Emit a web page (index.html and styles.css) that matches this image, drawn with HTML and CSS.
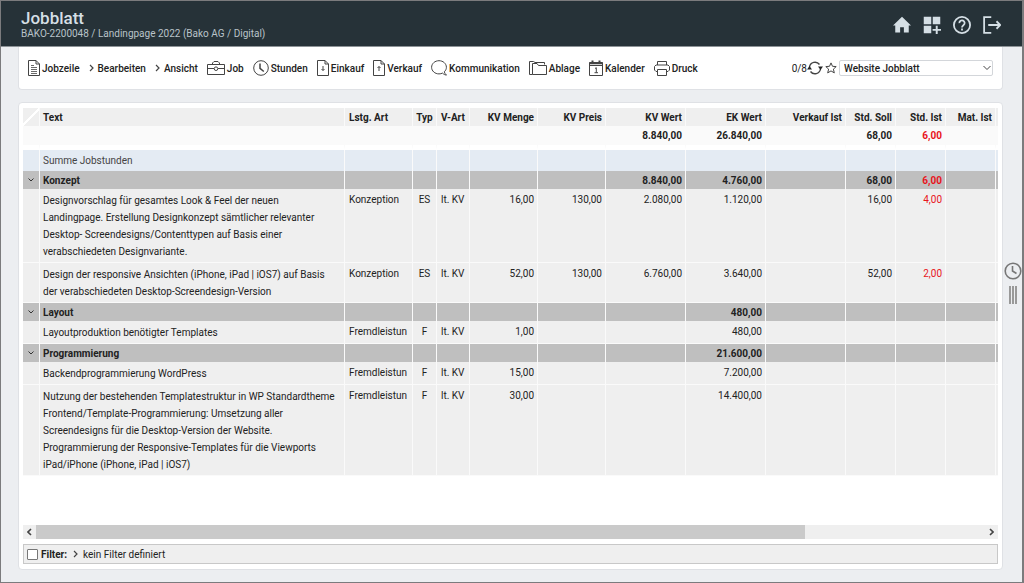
FILE: index.html
```html
<!DOCTYPE html>
<html lang="de">
<head>
  <meta charset="UTF-8">
  <meta name="viewport" content="width=device-width, initial-scale=1.0">
  <title>Jobblatt</title>
  <link rel="stylesheet" href="styles.css">
</head>
<body>
  <header class="header">
    <div class="heading">
      <h1>Jobblatt</h1>
      <p>BAKO-2200048 / Landingpage 2022 (Bako AG / Digital)</p>
    </div>
    <nav class="header-nav">
      <a href="#" aria-label="Home">
        <svg viewBox="0 0 24 24" fill="currentColor"><path d="M9.500 22v-7h5v7H21v-9.500h3L12 1 0 12.500h3V22z"/></svg>
      </a>
      <a href="#" aria-label="Widgets">
        <svg viewBox="0 0 24 24" fill="currentColor"><path d="M1 1h10v10H1zM13 1h10v10H13zM1 13h10v10H1zM17 13h2.600v4.200H24v2.600h-4.400V24H17v-4.200h-4.200v-2.600H17z"/></svg>
      </a>
      <a href="#" aria-label="Hilfe">
        <svg viewBox="0 0 24 24" fill="none" stroke="currentColor" stroke-width="2.4"><circle cx="12" cy="12" r="10.800"/><path d="M8.500 9.500a3.500 3.500 0 1 1 5.600 2.600c-1.300 1-2.100 1.500-2.100 3.200M12 16.800v2.400"/></svg>
      </a>
      <a href="#" aria-label="Abmelden">
        <svg viewBox="0 0 24 24" fill="none" stroke="currentColor" stroke-width="2.400"><path d="M11 1.500H1.500v21H11M7 12h16M18 7l5 5-5 5"/></svg>
      </a>
    </nav>
  </header>

  <div class="page">
    <main class="content">
      <div class="toolbar">
        <button class="tool">
          <svg class="doc" viewBox="0 0 12 16"><path d="M.5.5H8L11.500 4v11.500H.5zM8 .5V4h3.500"/><path d="M3 5.500h3M3 7.500h6M3 9.500h6M3 11.500h6M3 13.500h6" stroke-width=".8"/></svg>
          Jobzeile
        </button>
        <button class="tool menu">
          <svg class="chevron" viewBox="0 0 5 8"><path d="M1 1l3 3-3 3"/></svg>
          Bearbeiten
        </button>
        <button class="tool menu">
          <svg class="chevron" viewBox="0 0 5 8"><path d="M1 1l3 3-3 3"/></svg>
          Ansicht
        </button>
        <button class="tool">
          <svg class="wide" viewBox="0 0 18 16"><path d="M.5 4.500h17v10H.5zM5.500 4.500V3L7 1.500h4L12.500 3v1.500M.5 8.500H7M11 8.500h6.500"/><circle cx="9" cy="8.700" r="1.800"/></svg>
          Job
        </button>
        <button class="tool">
          <svg viewBox="0 0 16 16"><circle cx="8" cy="8" r="7.300"/><path d="M7 3.500v4.800l3.800 3.200" stroke-width="1.500"/></svg>
          Stunden
        </button>
        <button class="tool">
          <svg class="doc" viewBox="0 0 12 16"><path d="M.5.5H8L11.500 4v11.500H.5zM8 .5V4h3.500M6 6v4.500M4.500 9L6 10.500 7.500 9"/></svg>
          Einkauf
        </button>
        <button class="tool">
          <svg class="doc" viewBox="0 0 12 16"><path d="M.5.5H8L11.500 4v11.500H.5zM8 .5V4h3.500M6 11V6.500M4.500 8L6 6.500 7.500 8"/></svg>
          Verkauf
        </button>
        <button class="tool">
          <svg viewBox="0 0 16 16"><path d="M13.300 11.800c1.300-1.200 2.100-2.700 2.100-4.500C15.400 3.600 12.100.7 8 .7S.6 3.600.6 7.300 3.900 13.900 8 13.900c1.300 0 2.500-.3 3.500-.8 1.200 1.200 2.500 1.900 4 2-1.200-.9-1.900-2-2.200-3.300z"/></svg>
          Kommunikation
        </button>
        <button class="tool">
          <svg class="wide" viewBox="0 0 18 16"><path d="M3.500 14.500h-3v-13h4L6 2.500h9.500v2M3.500 14.500v-11H8l1.500 2h8v9z"/></svg>
          Ablage
        </button>
        <button class="tool">
          <svg class="cal" viewBox="0 0 14 16"><path d="M.5 2.500h13v13H.5zM.5 5.500h13M6 8.500l1.300-.8v5M5.500 12.700h3.500"/><path d="M3.500.5v3M10.500.5v3M.5 3.300h13" stroke-width="2"/></svg>
          Kalender
        </button>
        <button class="tool">
          <svg viewBox="0 0 16 16"><path d="M3.500 5V1.500h9V5M3.500 11.500H2l-1.500-1.500V6.500L2 5h12l1.500 1.500V10L14 11.500h-1.500M3.500 9.500h9v6h-9z"/></svg>
          Druck
        </button>

        <div class="view">
          <span>0/8</span>
          <button class="icon-btn refresh" aria-label="Aktualisieren">
            <svg viewBox="0 0 16 14"><path d="M2.500 6A5.600 5.600 0 0 1 12.500 3.500M13.500 8A5.600 5.600 0 0 1 3.500 10.500"/><path d="M0 8.500h5L2.500 5zM11 5.500h5L13.500 9z" fill="currentColor" stroke="none"/></svg>
          </button>
          <button class="icon-btn star" aria-label="Favorit">
            <svg viewBox="0 0 12 12"><path d="M6 .9l1.500 3.400 3.700.3-2.800 2.500.9 3.800L6 8.900l-3.300 2 .9-3.800L.8 4.600l3.700-.3z"/></svg>
          </button>
          <select class="view-select" aria-label="Ansicht">
            <option>Website Jobblatt</option>
          </select>
        </div>
      </div>

      <section class="sheet">
        <div class="table-wrap">
          <table class="jobs">
            <colgroup>
              <col class="c-toggle"><col><col class="c-art"><col class="c-typ"><col class="c-vart">
              <col class="c-menge"><col class="c-menge"><col class="c-wert"><col class="c-wert"><col class="c-wert">
              <col class="c-std"><col class="c-std"><col class="c-std"><col class="c-end">
            </colgroup>
            <thead>
              <tr>
                <th class="corner"></th><th class="text">Text</th><th>Lstg. Art</th><th class="mid">Typ</th><th>V-Art</th>
                <th class="num">KV Menge</th><th class="num">KV Preis</th><th class="num">KV Wert</th><th class="num">EK Wert</th><th class="num">Verkauf Ist</th>
                <th class="num">Std. Soll</th><th class="num">Std. Ist</th><th class="num">Mat. Ist</th><th></th>
              </tr>
              <tr class="total">
                <td></td><td></td><td></td><td></td><td></td><td></td><td></td>
                <td class="num">8.840,00</td><td class="num">26.840,00</td><td></td><td class="num">68,00</td><td class="num red">6,00</td><td></td><td></td>
              </tr>
            </thead>
            <tbody>
              <tr class="hours">
                <td></td><td class="text">Summe Jobstunden</td><td></td><td></td><td></td><td></td><td></td><td></td><td></td><td></td><td></td><td></td><td></td><td></td>
              </tr>
              <tr class="group">
                <td><button class="toggle" aria-label="Konzept einklappen"><svg viewBox="0 0 6 4"><path d="M.5.5L3 3 5.500.5"/></svg></button></td>
                <td class="text">Konzept</td><td></td><td></td><td></td><td></td><td></td>
                <td class="num">8.840,00</td><td class="num">4.760,00</td><td></td><td class="num">68,00</td><td class="num red">6,00</td><td></td><td></td>
              </tr>
              <tr>
                <td></td>
                <td class="text desc">Designvorschlag für gesamtes Look &amp; Feel der neuen<br>Landingpage. Erstellung Designkonzept sämtlicher relevanter<br>Desktop- Screendesigns/Contenttypen auf Basis einer<br>verabschiedeten Designvariante.</td>
                <td>Konzeption</td><td class="mid">ES</td><td>lt. KV</td><td class="num">16,00</td><td class="num">130,00</td>
                <td class="num">2.080,00</td><td class="num">1.120,00</td><td></td><td class="num">16,00</td><td class="num red">4,00</td><td></td><td></td>
              </tr>
              <tr>
                <td></td>
                <td class="text desc">Design der responsive Ansichten (iPhone, iPad | iOS7) auf Basis<br>der verabschiedeten Desktop-Screendesign-Version</td>
                <td>Konzeption</td><td class="mid">ES</td><td>lt. KV</td><td class="num">52,00</td><td class="num">130,00</td>
                <td class="num">6.760,00</td><td class="num">3.640,00</td><td></td><td class="num">52,00</td><td class="num red">2,00</td><td></td><td></td>
              </tr>
              <tr class="group">
                <td><button class="toggle" aria-label="Layout einklappen"><svg viewBox="0 0 6 4"><path d="M.5.5L3 3 5.500.5"/></svg></button></td>
                <td class="text">Layout</td><td></td><td></td><td></td><td></td><td></td>
                <td></td><td class="num">480,00</td><td></td><td></td><td></td><td></td><td></td>
              </tr>
              <tr>
                <td></td>
                <td class="text desc">Layoutproduktion benötigter Templates</td>
                <td>Fremdleistun</td><td class="mid">F</td><td>lt. KV</td><td class="num">1,00</td><td></td>
                <td></td><td class="num">480,00</td><td></td><td></td><td></td><td></td><td></td>
              </tr>
              <tr class="group">
                <td><button class="toggle" aria-label="Programmierung einklappen"><svg viewBox="0 0 6 4"><path d="M.5.5L3 3 5.500.5"/></svg></button></td>
                <td class="text">Programmierung</td><td></td><td></td><td></td><td></td><td></td>
                <td></td><td class="num">21.600,00</td><td></td><td></td><td></td><td></td><td></td>
              </tr>
              <tr>
                <td></td>
                <td class="text desc">Backendprogrammierung WordPress</td>
                <td>Fremdleistun</td><td class="mid">F</td><td>lt. KV</td><td class="num">15,00</td><td></td>
                <td></td><td class="num">7.200,00</td><td></td><td></td><td></td><td></td><td></td>
              </tr>
              <tr>
                <td></td>
                <td class="text desc">Nutzung der bestehenden Templatestruktur in WP Standardtheme<br>Frontend/Template-Programmierung: Umsetzung aller<br>Screendesigns für die Desktop-Version der Website.<br>Programmierung der Responsive-Templates für die Viewports<br>iPad/iPhone (iPhone, iPad | iOS7)</td>
                <td>Fremdleistun</td><td class="mid">F</td><td>lt. KV</td><td class="num">30,00</td><td></td>
                <td></td><td class="num">14.400,00</td><td></td><td></td><td></td><td></td><td></td>
              </tr>
            </tbody>
          </table>
        </div>

        <div class="scrollbar">
          <button class="scroll-btn" aria-label="Nach links"><svg viewBox="0 0 5 8"><path d="M4 1L1 4l3 3"/></svg></button>
          <div class="track"><div class="thumb"></div></div>
          <button class="scroll-btn" aria-label="Nach rechts"><svg viewBox="0 0 5 8"><path d="M1 1l3 3-3 3"/></svg></button>
        </div>

        <div class="filter">
          <input type="checkbox" id="filter">
          <label for="filter">Filter:</label>
          <button class="filter-menu">
            <svg class="chevron" viewBox="0 0 5 8"><path d="M1 1l3 3-3 3"/></svg>
            kein Filter definiert
          </button>
        </div>
      </section>
    </main>

    <aside class="side">
      <button class="icon-btn side-clock" aria-label="Zeiterfassung">
        <svg viewBox="0 0 18 18"><circle cx="9" cy="9" r="7.800"/><path d="M8.500 4v5l4 2.500"/></svg>
      </button>
      <div class="grip"></div>
    </aside>
  </div>
</body>
</html>
```
FILE: styles.css
```css
* {
  box-sizing: border-box;
}

body {
  margin: 0;
  min-height: 100vh;
  display: flex;
  flex-direction: column;
  border: 1px solid #7b7b7d;
  border-right-width: 2px;
  background: #eceef1;
  font-family: Roboto, sans-serif;
  font-size: 10px;
  color: #222;
}

button {
  padding: 0;
  border: none;
  background: none;
  font: inherit;
  color: inherit;
  cursor: pointer;
}

svg {
  display: block;
}

/* header */
.header {
  display: flex;
  justify-content: space-between;
  align-items: center;
  height: 46px;
  padding: 2px 21px 0 20px;
  background: #263238;
  border-bottom: 1px solid #8d9397;
  color: #d5dfe5;
}

.heading h1 {
  margin: 0;
  font-size: 17px;
  line-height: 18px;
  font-weight: 500;
}

.heading p {
  margin: 0;
  font-size: 10px;
  line-height: 14px;
  color: #b9c3c9;
}

.header-nav {
  display: flex;
  gap: 12px;
}

.header-nav a {
  color: inherit;
}

.header-nav svg {
  width: 18px;
  height: 18px;
}

/* page */
.page {
  flex: 1;
  display: flex;
}

.content {
  flex: 1;
  min-width: 0;
  display: flex;
  flex-direction: column;
  gap: 12px;
  padding: 0 0 12px 17px;
}

.toolbar {
  display: flex;
  align-items: center;
  gap: 9px;
  height: 43px;
  padding: 0 9px;
  background: #fff;
  border: 1px solid #dfe1e5;
  border-top: none;
  border-radius: 0 0 4px 4px;
  font-weight: 500;
}

.tool {
  display: flex;
  align-items: center;
  gap: 2px;
  white-space: nowrap;
}

.tool svg,
.icon-btn svg,
.filter svg {
  width: 16px;
  height: 16px;
  fill: none;
  stroke: #444;
  stroke-width: 1;
}

.tool svg.doc {
  width: 12px;
}

.tool svg.wide {
  width: 18px;
}

.tool svg.cal {
  width: 14px;
}

.tool.menu {
  gap: 4px;
}

.tool svg.chevron,
.filter svg.chevron {
  width: 5px;
  height: 8px;
  stroke-width: 1.2;
}

.view {
  display: flex;
  align-items: center;
  margin-left: auto;
  font-weight: 400;
}

.view-select,
.icon-btn.star {
  margin-left: 2px;
}

.icon-btn.refresh svg {
  height: 14px;
  stroke-width: 1.4;
}

.icon-btn.star svg {
  width: 12px;
  height: 12px;
}

.view-select {
  width: 154px;
  height: 16px;
  padding: 0 4px;
  appearance: none;
  border: 1px solid #d3d6da;
  border-radius: 2px;
  background: #fff url("data:image/svg+xml,%3Csvg xmlns='http://www.w3.org/2000/svg' width='8' height='6'%3E%3Cpath d='M.5 1L4 4.500 7.500 1' fill='none' stroke='%23444'/%3E%3C/svg%3E") no-repeat right 1px center;
  font: inherit;
  font-weight: 500;
  color: #222;
}

/* table */
.sheet {
  flex: 1;
  display: flex;
  flex-direction: column;
  gap: 5px;
  padding: 5px 4px;
  background: #fff;
  border: 1px solid #dfe1e5;
  border-radius: 4px;
}

.table-wrap {
  flex: 1;
  overflow: hidden;
}

.jobs {
  width: 100%;
  table-layout: fixed;
  border-collapse: separate;
  border-spacing: 0;
}

.c-toggle { width: 17px; }
.c-art { width: 68px; }
.c-typ { width: 24px; }
.c-vart { width: 33px; }
.c-menge { width: 68px; }
.c-wert { width: 80px; }
.c-std { width: 50px; }
.c-end { width: 2px; }

.jobs th,
.jobs td {
  padding: 2px 3px 2px 4px;
  border-right: 1px solid #fafafa;
  border-bottom: 1px solid #fafafa;
  background: #efefef;
  line-height: 17px;
  text-align: left;
  vertical-align: top;
  white-space: nowrap;
}

.jobs th:last-child,
.jobs td:last-child {
  padding: 0;
  border-right: none;
}

.jobs th {
  padding-top: 2px;
  padding-bottom: 0;
  border-bottom: none;
  line-height: 16px;
  font-weight: 700;
}

.jobs .corner {
  background: linear-gradient(135deg, #efefef 46%, #fff 46%, #fff 54%, #efefef 54%);
}

.jobs .total td {
  height: 24px;
  padding-top: 1px;
  padding-bottom: 0;
  border-bottom: 5px solid #fff;
  background: #fafafa;
  font-weight: 700;
}

.jobs .hours td {
  height: 20px;
  border-bottom: none;
  background: #e4ebf3;
  color: #444;
}

.jobs .group td {
  height: 18px;
  padding-top: 1px;
  padding-bottom: 0;
  border-bottom: none;
  background: #bfbfbf;
  font-weight: 700;
}

.jobs .text {
  padding-left: 3px;
}

.jobs .desc {
  padding-top: 3px;
}

.jobs .num {
  text-align: right;
}

.jobs .mid {
  padding: 2px 0 0;
  text-align: center;
}

.jobs .red {
  color: #e8141c;
}

.toggle {
  display: block;
  height: 16px;
}

.toggle svg {
  width: 6px;
  height: 4px;
  margin: 0 1px;
  fill: none;
  stroke: #333;
}

/* scrollbar and filter */
.scrollbar {
  display: flex;
  height: 14px;
  background: #efefef;
}

.scroll-btn {
  padding: 0 4px;
}

.scroll-btn svg {
  width: 5px;
  height: 8px;
  fill: none;
  stroke: #444;
  stroke-width: 1.6;
}

.track {
  flex: 1;
}

.thumb {
  width: 81%;
  height: 100%;
  background: #cacaca;
}

.filter {
  display: flex;
  align-items: center;
  height: 20px;
  padding: 0 3px;
  border: 1px solid #c8c8c8;
  background: #efefef;
}

.filter input {
  width: 11px;
  height: 11px;
  margin: 0 3px 0 0;
  appearance: none;
  border: 1px solid #777;
  border-radius: 1px;
  background: #fff;
}

.filter input:checked {
  background: #263238;
}

.filter label {
  margin-right: 6px;
  font-weight: 700;
}

.filter-menu {
  display: flex;
  align-items: center;
  gap: 5px;
}

/* right edge */
.side {
  display: flex;
  flex-direction: column;
  align-items: flex-end;
  justify-content: center;
  gap: 6px;
  width: 19px;
  padding-bottom: 64px;
}

.icon-btn.side-clock svg {
  width: 18px;
  height: 18px;
  stroke: #777;
  stroke-width: 1.6;
}

.grip {
  width: 8px;
  height: 18px;
  margin-right: 5px;
  border: solid #999;
  border-width: 0 2px;
  background: linear-gradient(#999, #999) center / 2px 100% no-repeat;
}
```
